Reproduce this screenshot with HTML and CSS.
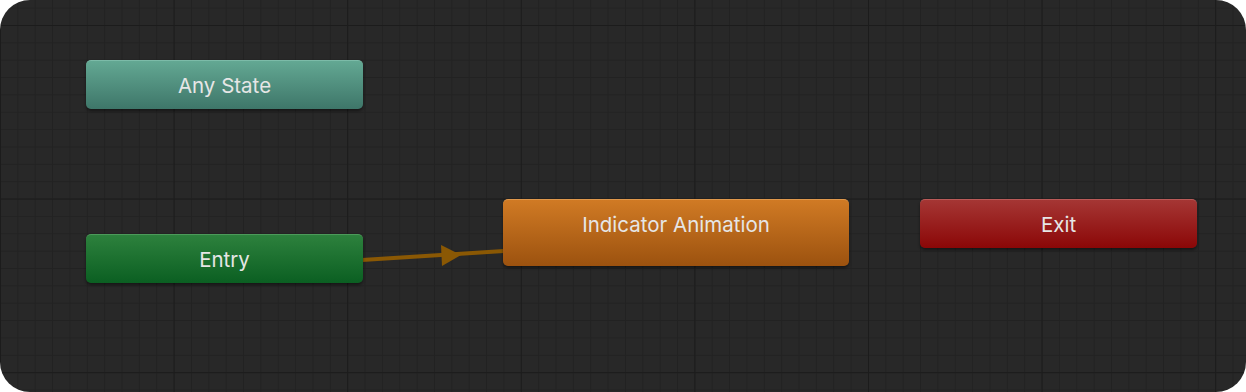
FILE: index.html
```html
<!DOCTYPE html>
<html lang="en">

<head>
    <meta charset="UTF-8">
    <title>Animator</title>
    <link rel="stylesheet" href="styles.css">
</head>

<body>
    <div class="graph">
        <!-- transition Entry -> Indicator Animation -->
        <svg class="links" width="1246" height="392" viewBox="0 0 1246 392">
            <line x1="362" y1="260" x2="504" y2="251" stroke="#8a5804" stroke-width="4" />
            <polygon points="441,245 461,255 442,266" fill="#8a5804" />
        </svg>

        <div class="node any">Any State</div>
        <div class="node entry">Entry</div>
        <div class="node state">Indicator Animation</div>
        <div class="node exit">Exit</div>
    </div>
</body>

</html>
```

FILE: styles.css
```css
* {
    margin: 0;
    padding: 0;
    box-sizing: border-box;
}

body {
    background-color: #ffffff;
    font-family: Inter, "Noto Sans", sans-serif;
}

.graph {
    position: relative;
    width: 1246px;
    height: 392px;
    border-radius: 30px;
    overflow: hidden;
    background-color: #282828;
    background-image:
        linear-gradient(to right, #1c1c1c 1px, transparent 1px),
        linear-gradient(to bottom, #1c1c1c 1px, transparent 1px),
        linear-gradient(to right, #222222 1px, transparent 1px),
        linear-gradient(to bottom, #222222 1px, transparent 1px);
    background-size:
        173.6px 100%,
        100% 173.6px,
        17.36px 100%,
        100% 17.36px;
    background-position:
        0 0,
        0 25px,
        0 0,
        0 7.6px;
}

.links {
    position: absolute;
    top: 0;
    left: 0;
}

.node {
    position: absolute;
    width: 277px;
    height: 49px;
    border-radius: 5px;
    color: #e6e6e6;
    font-size: 20.5px;
    line-height: 49px;
    text-align: center;
    box-shadow: 0 2px 3px rgba(0, 0, 0, .45);
}

.any {
    left: 86px;
    top: 60px;
    background: linear-gradient(#63a893, #3e7669);
    border-top: 1px solid #7cbba8;
}

.entry {
    left: 86px;
    top: 234px;
    background: linear-gradient(#2d813d, #0b5f22);
    border-top: 1px solid #4c9a5a;
}

.state {
    left: 503px;
    top: 199px;
    width: 346px;
    height: 67px;
    background: linear-gradient(#d07a24, #9c520f);
    border-top: 1px solid #e0984c;
}

.exit {
    left: 920px;
    top: 199px;
    background: linear-gradient(#a53634, #8b0707);
    border-top: 1px solid #ba5a58;
}
```
